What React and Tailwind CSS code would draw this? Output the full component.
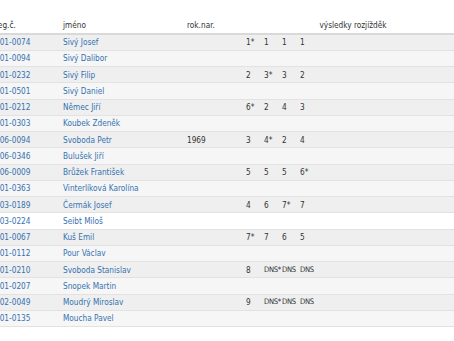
import React from "react";

const rows = [
  ["201-0074", "Sivý Josef", "", ["1*", "1", "1", "1"]],
  ["201-0094", "Sivý Dalibor", "", []],
  ["201-0232", "Sivý Filip", "", ["2", "3*", "3", "2"]],
  ["201-0501", "Sivý Daniel", "", []],
  ["201-0212", "Němec Jiří", "", ["6*", "2", "4", "3"]],
  ["201-0303", "Koubek Zdeněk", "", []],
  ["206-0094", "Svoboda Petr", "1969", ["3", "4*", "2", "4"]],
  ["206-0346", "Bulušek Jiří", "", []],
  ["206-0009", "Brůžek František", "", ["5", "5", "5", "6*"]],
  ["701-0363", "Vinterlíková Karolína", "", []],
  ["203-0189", "Čermák Josef", "", ["4", "6", "7*", "7"]],
  ["203-0224", "Seibt Miloš", "", [], true],
  ["201-0067", "Kuš Emil", "", ["7*", "7", "6", "5"]],
  ["201-0112", "Pour Václav", "", []],
  ["201-0210", "Svoboda Stanislav", "", ["8", "DNS*", "DNS", "DNS"]],
  ["201-0207", "Snopek Martin", "", []],
  ["702-0049", "Moudrý Miroslav", "", ["9", "DNS*", "DNS", "DNS"]],
  ["701-0135", "Moucha Pavel", "", []],
];

export default function App() {
  return (
    <div
      className="w-[454px] h-[341px] overflow-hidden bg-white text-[#333] text-[8.2px] leading-none pt-[18px]"
      style={{ fontFamily: '"DejaVu Sans Condensed", "Roboto", sans-serif', fontStretch: "condensed" }}
    >
      <table className="table-fixed border-collapse -ml-[5px] w-[459px]">
        <colgroup>
          <col className="w-[68px]" />
          <col className="w-[124px]" />
          <col className="w-[59px]" />
          <col className="w-[18px]" />
          <col className="w-[18px]" />
          <col className="w-[18px]" />
          <col className="w-[18px]" />
          <col />
        </colgroup>
        <thead>
          <tr className="h-[16px] border-b-2 border-[#d9d9d9]">
            <th className="text-left font-normal p-0 align-middle">reg.č.</th>
            <th className="text-left font-normal p-0 align-middle">jméno</th>
            <th className="text-left font-normal p-0 align-middle">rok.nar.</th>
            <th colSpan={5} className="text-center font-normal p-0 pl-[6px] align-middle">
              výsledky rozjížděk
            </th>
          </tr>
        </thead>
        <tbody>
          {rows.map(([reg, name, year, heats, hl], i) => (
            <tr
              key={reg + name}
              className={`h-[16.25px] border-b border-[#e2e2e2] ${
                hl ? "bg-white" : i % 2 === 0 ? "bg-[#efefef]" : "bg-[#f6f6f6]"
              }`}
            >
              <td className="p-0 text-[#3572b0]">{reg}</td>
              <td className="p-0 text-[#3572b0]">{name}</td>
              <td className="p-0">{year}</td>
              {[0, 1, 2, 3].map((k) => (
                <td
                  key={k}
                  className={`p-0 whitespace-nowrap ${
                    (heats[k] || "").length > 2 ? "text-[7.6px] tracking-[-0.35px]" : ""
                  }`}
                >
                  {heats[k] || ""}
                </td>
              ))}
              <td className="p-0" />
            </tr>
          ))}
        </tbody>
      </table>
    </div>
  );
}
